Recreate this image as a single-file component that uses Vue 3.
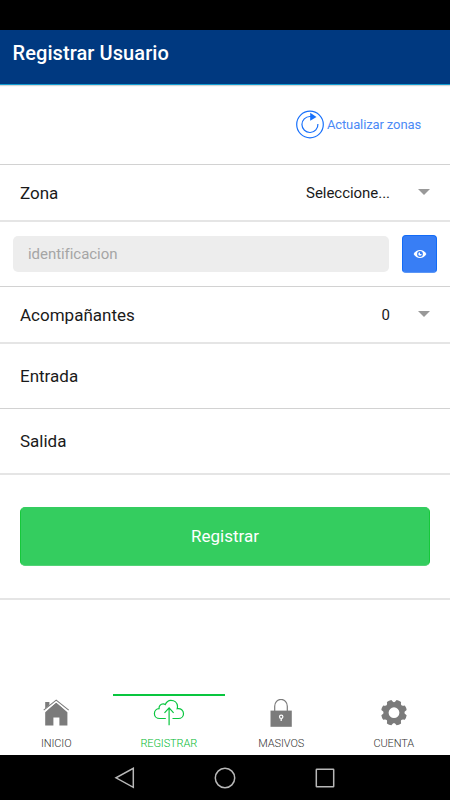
<script setup>
const tabs = [
  { id: 'home', label: 'INICIO' },
  { id: 'upload', label: 'REGISTRAR', active: true },
  { id: 'lock', label: 'MASIVOS' },
  { id: 'gear', label: 'CUENTA' },
]
const teeth = [22.5, 67.5, 112.5, 157.5, 202.5, 247.5, 292.5, 337.5]
</script>

<template>
  <div class="screen">
    <div class="status"></div>
    <header class="header"><h1>Registrar Usuario</h1></header>
    <main class="content">
      <section class="row refresh">
        <button class="refresh-button">
          <svg width="30" height="30" viewBox="0 0 30 30" fill="none" stroke="#1971fb" stroke-width="1.2">
            <circle cx="15" cy="14.5" r="13.3" />
            <path d="M22.9 14A8 8 0 1 1 15 6.500h1" />
            <path d="M15.200 2.700v8l6.300-3.800z" fill="#1971fb" stroke="none" />
          </svg>
          <span>Actualizar zonas</span>
        </button>
      </section>
      <section class="row select thick">
        <label>Zona</label>
        <span class="value">Seleccione...</span>
        <i class="arrow"></i>
      </section>
      <section class="row ident">
        <input class="field" type="text" placeholder="identificacion" />
        <button class="eye">
          <svg width="14" height="10" viewBox="0 0 14 10">
            <path d="M.6 5C2.2 2.2 4.3.9 7 .9S11.8 2.2 13.4 5C11.8 7.8 9.7 9.1 7 9.1S2.2 7.8.6 5z" fill="#fff" />
            <circle cx="7" cy="5" r="2.9" fill="#387ef5" />
            <circle cx="7" cy="5" r="1.7" fill="#fff" />
            <path d="M7 5V2.7A2.3 2.3 0 0 1 9.3 5z" fill="#387ef5" />
          </svg>
        </button>
      </section>
      <section class="row select thick">
        <label>Acompañantes</label>
        <span class="value">0</span>
        <i class="arrow"></i>
      </section>
      <section class="row date"><label>Entrada</label></section>
      <section class="row date last thick"><label>Salida</label></section>
      <section class="row submit thick"><button class="register">Registrar</button></section>
    </main>
    <nav class="tabs">
      <a v-for="tab in tabs" :key="tab.id" class="tab" :class="{ active: tab.active }">
        <svg class="icon" width="32" height="30" viewBox="0 0 32 30">
          <g v-if="tab.id === 'home'" fill="#7b7b7b">
            <path d="M5.2 3h4.200v5l-4.200 3.600z" />
            <path d="M16.200 3.200l11.200 10v13.400h-8v-8h-6v8H5.200V13.200z" />
            <path d="M4.300 11.700L16.200 2.100l12 9.600" fill="none" stroke="#fff" stroke-width="2.200" />
            <path d="M3.700 11.100L16.200 1.100l12.500 10" fill="none" stroke="#7b7b7b" stroke-width="1.100" />
          </g>
          <g v-else-if="tab.id === 'upload'" fill="none" stroke="#09c63f" stroke-width="1.200">
            <path d="M12.800 19.500H6.800C3.500 19.500 1.400 17.300 1.400 14.700c0-2.800 2-4.900 4.700-5-.4-2.500 1.400-4.800 4.100-4.800.8 0 1.500.2 2.100.6C13.500 2.700 15.300 1.300 17.800 1.300c3.700 0 6.500 2.400 6.700 6 0 .9-.1 1.700-.3 2.400 3.700-.7 6.300 1.700 6.300 5 0 2.800-2.200 4.800-5 4.800H19.500" />
            <path d="M16.100 26.300V9.200M11.500 13.800l4.600-4.900 4.500 4.900" />
          </g>
          <g v-else-if="tab.id === 'lock'">
            <path d="M9.700 12V7.300a6.300 6.900 0 0 1 12.600 0V12" fill="none" stroke="#7b7b7b" stroke-width="1.2" />
            <path d="M5.500 11.600h21.300v16.200H5.500z" fill="#7b7b7b" />
            <circle cx="16.200" cy="17.800" r="1.700" fill="none" stroke="#fff" stroke-width="1.200" />
            <path d="M16.200 19.400v2.500" stroke="#fff" stroke-width="1.300" />
          </g>
          <g v-else>
            <path v-for="angle in teeth" :key="angle" d="M11.500 4.700Q13.100 3.800 13.600 1Q16 .4 18.400 1Q18.900 3.800 20.500 4.700L16 7z" fill="#7b7b7b" :transform="`rotate(${angle} 16 13.700)`" />
            <circle cx="16" cy="13.700" r="7.700" fill="none" stroke="#7b7b7b" stroke-width="4.600" />
          </g>
        </svg>
        <span>{{ tab.label }}</span>
      </a>
    </nav>
    <footer class="system">
      <svg width="22" height="22" viewBox="0 0 22 22"><path d="M19.300 1.300v19L2 10.800z" /></svg>
      <svg width="22" height="22" viewBox="0 0 22 22"><circle cx="11" cy="11" r="9.700" /></svg>
      <svg width="22" height="22" viewBox="0 0 22 22"><rect x="2.300" y="2.300" width="17.400" height="17.400" rx=".5" /></svg>
    </footer>
  </div>
</template>

<style>
body { margin: 0; background: #fff; }
</style>

<style scoped>
.screen { width: 450px; height: 800px; display: flex; flex-direction: column; background: #fff; color: #1a1a1a; font-family: Roboto, sans-serif; overflow: hidden; }
.screen * { box-sizing: border-box; }
.status { height: 30px; background: #000; }
.header { height: 55px; padding: 11px 12.5px 0; background: #003980; border-bottom: 1px solid #119bd0; box-shadow: 0 1px 1px #d7d7d7; z-index: 1; }
h1 { margin: 0; color: #fff; font-size: 20px; line-height: 25px; font-weight: 500; letter-spacing: .08px; }
button { padding: 0; margin: 0; border: 0; font-family: inherit; }
.content { flex: 1; }
.row { display: flex; align-items: center; border-bottom: 1px solid #d2d2d2; }
.thick { border-bottom: 2px solid #e5e5e5; }
.refresh { height: 80px; padding-right: 29px; justify-content: flex-end; }
.refresh-button { display: flex; align-items: center; gap: 2px; background: none; color: #4b8af6; font-size: 13px; letter-spacing: -.12px; }
.select { height: 57px; padding: 0 20px; }
label { flex: 1; font-size: 17px; line-height: 24px; }
.value { font-size: 15px; margin-right: 28px; letter-spacing: -.04px; }
.arrow { width: 0; height: 0; margin-bottom: 1px; border: 6.5px solid transparent; border-top-color: #999; border-bottom: 0; }
.ident { height: 65px; padding: 0 13px; justify-content: space-between; }
.field { width: 376px; height: 36px; padding: 0 15px; border: 0; border-radius: 5px; background: #ededed; font: 15px Roboto, sans-serif; letter-spacing: -.05px; }
.field::placeholder { color: #a5a5a5; opacity: 1; }
.eye { width: 35px; height: 38px; margin-bottom: 1px; display: flex; align-items: center; justify-content: center; border: 1px solid #126bf7; border-bottom-color: #5b96f6; border-radius: 4px; background: #387ef5; }
.date { height: 65px; padding: 0 20px; }
.last { height: 66px; }
.submit { height: 125px; padding: 0 20px; }
.register { width: 410px; height: 59px; padding-bottom: 2px; border: 1px solid #16c83a; border-top-color: #34cd5f; border-bottom-color: #54d377; border-radius: 5px; background: #34cd5f; color: #fff; font-size: 17px; }
.tabs { height: 61px; display: grid; grid-template-columns: repeat(4, 1fr); }
.tab { display: flex; flex-direction: column; align-items: center; color: #333; border-top: 2px solid transparent; padding-top: 3px; font-size: 11px; font-weight: 300; letter-spacing: -.12px; }
.tab.active { color: #00b92f; border-color: #09c63f; }
.icon { display: block; margin-bottom: 7px; }
.tab span { line-height: 15px; }
.system { height: 45px; display: flex; align-items: center; justify-content: center; gap: 78px; background: #000; }
.system svg { fill: none; stroke: #b8b8b8; stroke-width: 1.5; }
</style>
